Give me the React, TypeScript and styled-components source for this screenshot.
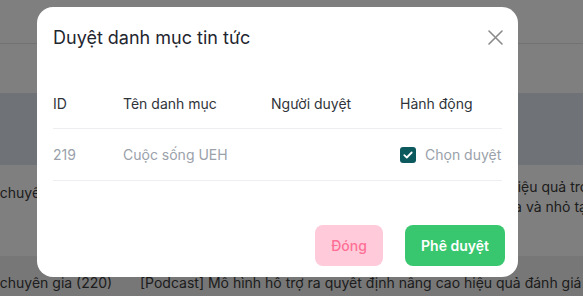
import React from "react";
import styled, { createGlobalStyle } from "styled-components";

const GlobalStyle = createGlobalStyle`
    html, body {
        margin: 0;
        padding: 0;
        width: 583px;
        height: 296px;
        overflow: hidden;
        background: #ffffff;
        font-family: Inter, "Noto Sans", sans-serif;
    }
`;

const Page = styled.div`
    width: 583px;
    height: 296px;
    overflow: hidden;
    display: flex;
    flex-direction: column;
`;

const TopBar = styled.div`
    height: 43px;
    border-bottom: 1px solid #e4e4e4;
    flex-shrink: 0;
`;

const FilterBar = styled.div`
    height: 49px;
    flex-shrink: 0;
`;

const TableHead = styled.div`
    height: 72px;
    background: #dee6ee;
    flex-shrink: 0;
`;

const BgRow = styled.div<{ $shade?: boolean; $height: number }>`
    display: grid;
    grid-template-columns: 171px 1fr;
    height: ${(p) => p.$height}px;
    background: ${(p) => (p.$shade ? "#eeeeee" : "#ffffff")};
    margin-left: -31px;
    font-size: 14px;
    color: #3a3a3a;
    flex-shrink: 0;
    white-space: nowrap;
`;

const BgCell = styled.div<{ $top: number }>`
    padding-top: ${(p) => p.$top}px;
    line-height: 20px;
`;

const Overlay = styled.div`
    position: fixed;
    inset: 0;
    background: rgba(0, 0, 0, 0.5);
    padding: 7px 0 0 37px;
`;

const Modal = styled.div`
    width: 481px;
    height: 270px;
    box-sizing: border-box;
    background: #ffffff;
    border-radius: 16px;
    padding: 18px 16px 0 16px;
    display: flex;
    flex-direction: column;
`;

const ModalHeader = styled.div`
    display: flex;
    align-items: center;
    justify-content: space-between;
    height: 24px;
`;

const Title = styled.h2`
    margin: 0;
    font-size: 18px;
    font-weight: 400;
    color: #1f2630;
`;

const CloseButton = styled.button`
    border: none;
    background: none;
    padding: 0;
    width: 16px;
    height: 16px;
    display: flex;
    align-items: center;
    justify-content: center;
    margin-right: -1px;
    cursor: pointer;
`;

const Table = styled.div`
    margin-top: 29px;
`;

const Row = styled.div<{ $head?: boolean }>`
    display: grid;
    grid-template-columns: 70px 148px 129px 1fr;
    align-items: center;
    height: ${(p) => (p.$head ? 50 : 51)}px;
    border-bottom: 1px solid #eceef1;
    font-size: 14px;
    color: ${(p) => (p.$head ? "#30343a" : "#9aa1aa")};
`;

const Action = styled.label`
    display: flex;
    align-items: center;
    gap: 9px;
`;

const Check = styled.span`
    width: 16px;
    height: 16px;
    border-radius: 3px;
    background: #0d5a5e;
    display: flex;
    align-items: center;
    justify-content: center;
`;

const Footer = styled.div`
    display: flex;
    justify-content: flex-end;
    gap: 22px;
    margin-top: 44px;
    margin-right: -3px;
`;

const Button = styled.button<{ $primary?: boolean }>`
    height: 41px;
    width: ${(p) => (p.$primary ? 100 : 68)}px;
    border: none;
    border-radius: 8px;
    font-family: inherit;
    font-size: 14px;
    font-weight: ${(p) => (p.$primary ? 600 : 500)};
    background: ${(p) => (p.$primary ? "#38c76e" : "#ffcbdb")};
    color: ${(p) => (p.$primary ? "#ffffff" : "#ff6f95")};
    cursor: pointer;
`;

export default function App() {
    return (
        <>
            <GlobalStyle />
            <Page>
                <TopBar />
                <FilterBar />
                <TableHead />
                <BgRow $height={91}>
                    <BgCell $top={18}>Góc chuyên gia (221)</BgCell>
                    <BgCell $top={12}>
                        Giải pháp ứng dụng công nghệ hiện đại nhằm nâng cao hiệu quả trọng tâm
                        <br />
                        giữa bối cảnh chuyển đổi số ở các doanh nghiệp nhỏ, vừa và nhỏ tại Việt Nam
                    </BgCell>
                </BgRow>
                <BgRow $shade $height={60}>
                    <BgCell $top={17}>Góc chuyên gia (220)</BgCell>
                    <BgCell $top={17}>
                        [Podcast] Mô hình hỗ trợ ra quyết định nâng cao hiệu quả đánh giá
                    </BgCell>
                </BgRow>
            </Page>
            <Overlay>
                <Modal>
                    <ModalHeader>
                        <Title>Duyệt danh mục tin tức</Title>
                        <CloseButton aria-label="close">
                            <svg width="15" height="15" viewBox="0 0 15 15">
                                <path d="M1 1L14 14M14 1L1 14" stroke="#8a8a8a" strokeWidth="1.6" strokeLinecap="round" />
                            </svg>
                        </CloseButton>
                    </ModalHeader>
                    <Table>
                        <Row $head>
                            <span>ID</span>
                            <span>Tên danh mục</span>
                            <span>Người duyệt</span>
                            <span>Hành động</span>
                        </Row>
                        <Row>
                            <span>219</span>
                            <span>Cuộc sống UEH</span>
                            <span></span>
                            <Action>
                                <Check>
                                    <svg width="10" height="8" viewBox="0 0 10 8">
                                        <path d="M1.3 4.2L3.8 6.5L8.7 1.5" stroke="#ffffff" strokeWidth="1.8" fill="none" strokeLinecap="round" strokeLinejoin="round" />
                                    </svg>
                                </Check>
                                Chọn duyệt
                            </Action>
                        </Row>
                    </Table>
                    <Footer>
                        <Button>Đóng</Button>
                        <Button $primary>Phê duyệt</Button>
                    </Footer>
                </Modal>
            </Overlay>
        </>
    );
}
